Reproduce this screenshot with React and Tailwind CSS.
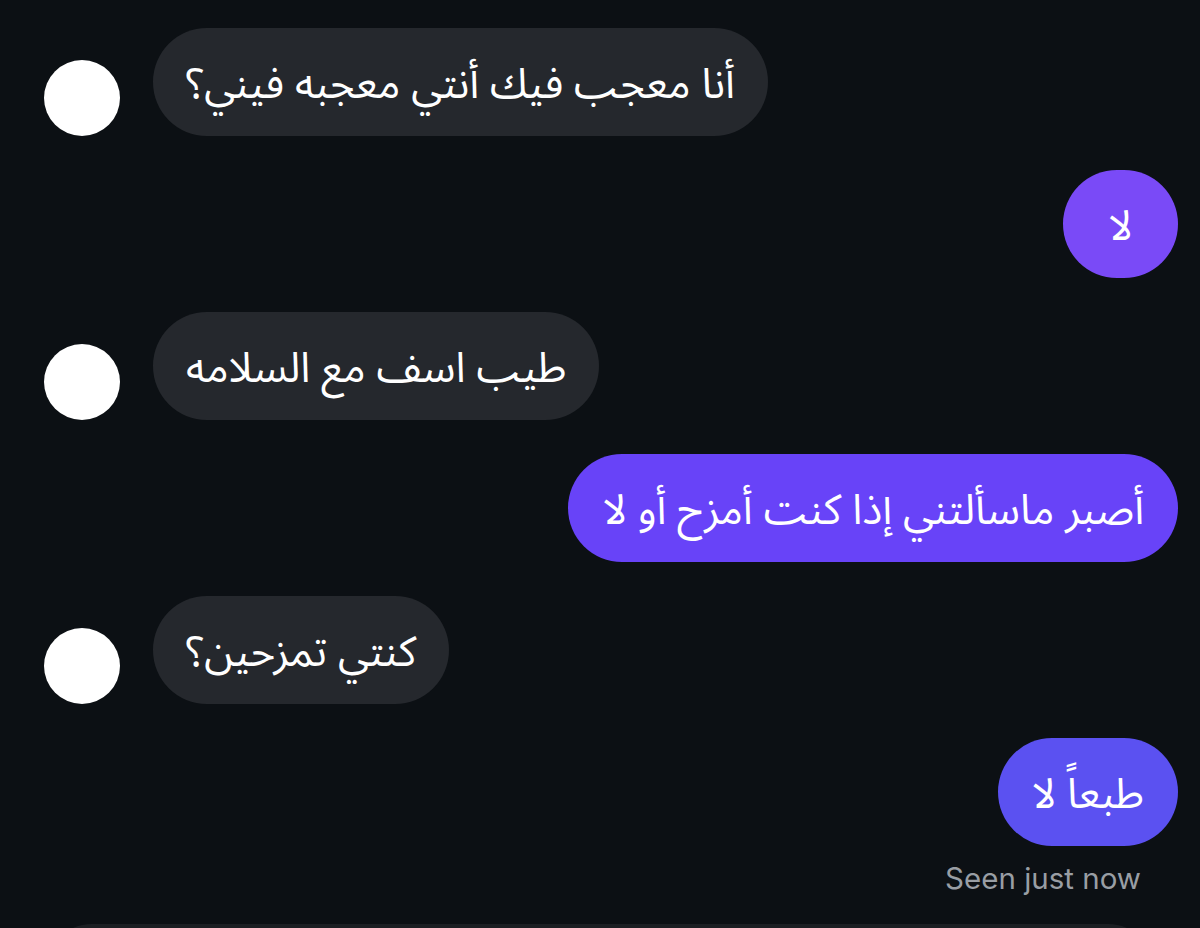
import React from "react";

const arabic = { fontFamily: '"Noto Sans Arabic", "DejaVu Sans", "Noto Sans", sans-serif' };

function Avatar() {
  return <div className="w-[76px] h-[76px] rounded-full bg-white shrink-0" />;
}

function Received({ text }) {
  return (
    <div className="flex items-end gap-[33px] pl-[44px]">
      <Avatar />
      <div
        dir="rtl"
        style={arabic}
        className="h-[108px] px-[33px] pt-[6px] rounded-full bg-[#25282d] text-white text-[42px] leading-none flex items-center whitespace-nowrap"
      >
        {text}
      </div>
    </div>
  );
}

function Sent({ text, color }) {
  return (
    <div className="flex justify-end pr-[22px]">
      <div
        dir="rtl"
        style={arabic}
        className={`h-[108px] min-w-[115px] px-[34px] pt-[6px] rounded-full text-white text-[42px] leading-none flex items-center justify-center whitespace-nowrap ${color}`}
      >
        {text}
      </div>
    </div>
  );
}

export default function App() {
  return (
    <div className="w-[1200px] h-[928px] overflow-hidden bg-[#0c1014] flex flex-col">
      <div className="flex flex-col gap-[34px] pt-[28px]">
        <Received text="أنا معجب فيك أنتي معجبه فيني؟" />
        <Sent text="لا" color="bg-[#7a4af7]" />
        <Received text="طيب اسف مع السلامه" />
        <Sent text="أصبر ماسألتني إذا كنت أمزح أو لا" color="bg-[#6843f8]" />
        <Received text="كنتي تمزحين؟" />
        <Sent text="طبعاً لا" color="bg-[#5b51f1]" />
      </div>
      <div className="flex justify-end pr-[59px] pt-[15px]">
        <span
          className="text-[29.5px] leading-[34px] text-[#999ea4]"
          style={{ fontFamily: 'Inter, "Noto Sans", sans-serif' }}
        >
          Seen just now
        </span>
      </div>
      <div className="px-[44px] pt-[29px]">
        <div className="h-[110px] rounded-[48px] bg-[#1c1f23]" />
      </div>
    </div>
  );
}
